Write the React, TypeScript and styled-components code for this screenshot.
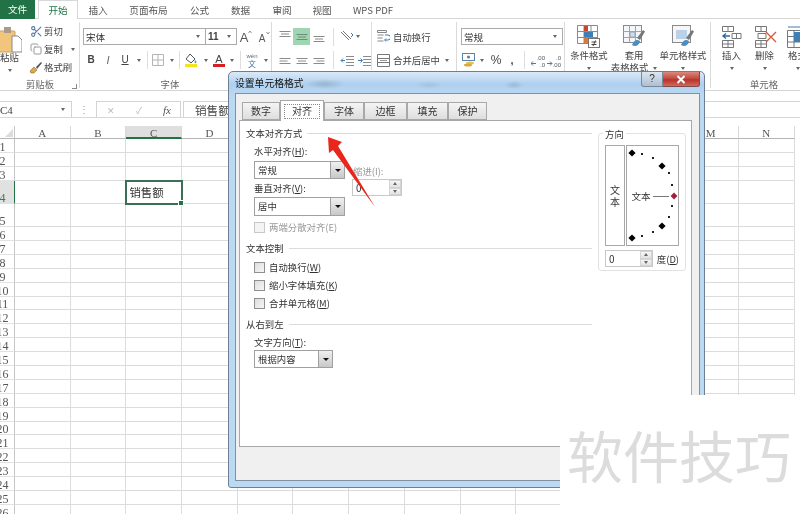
import { FC, ReactNode } from 'react';
import styled, { createGlobalStyle } from 'styled-components';
import { Copy, Scissors } from 'lucide-react';

const CJK = `"Noto Sans CJK SC", "Noto Sans", sans-serif`;
const SERIF = `"Liberation Serif", "Noto Sans CJK SC", serif`;

const Global = createGlobalStyle`
  html, body {
    margin: 0;
    padding: 0;
    background: #fff;
    overflow: hidden;
  }
`;

const Page = styled.div`
  position: relative;
  width: 800px;
  height: 514px;
  overflow: hidden;
  background: #fff;
  font-family: ${CJK};
  font-size: 9.4px;
  line-height: 14px;
  color: #444;
  filter: blur(0.35px);
`;

/* ---------- tabs ---------- */
const TabBar = styled.div`
  display: flex;
  height: 19px;
  box-sizing: border-box;
  border-bottom: 1px solid #d8d8d8;
`;
const FileTab = styled.div`
  width: 35px;
  height: 19px;
  margin-right: 3px;
  background: #217346;
  color: #fff;
  font-size: 9.6px;
  line-height: 19px;
  text-align: center;
`;
const Tab = styled.div<{ $w: number; $active?: boolean }>`
  width: ${({ $w }) => $w}px;
  height: ${({ $active }) => ($active ? 19 : 18)}px;
  box-sizing: border-box;
  font-size: 9.6px;
  line-height: 18px;
  text-align: center;
  color: ${({ $active }) => ($active ? '#217346' : '#555')};
  background: #fff;
  border: 1px solid ${({ $active }) => ($active ? '#d8d8d8' : 'transparent')};
  border-bottom: 0;
`;

/* ---------- ribbon ---------- */
const Ribbon = styled.div`
  display: flex;
  height: 72px;
  box-sizing: border-box;
  border-bottom: 1px solid #d4d4d4;
`;
const Group = styled.div<{ $w: number; $plain?: boolean }>`
  flex: none;
  width: ${({ $w }) => $w}px;
  display: flex;
  flex-direction: column;
  background: ${({ $plain }) =>
    $plain ? 'none' : 'linear-gradient(#dadada, #dadada) right 3px / 1px 66px no-repeat'};
`;
const GroupBody = styled.div<{ $top?: number; $left?: number }>`
  height: 59px;
  box-sizing: border-box;
  padding-top: ${({ $top }) => $top ?? 0}px;
  padding-left: ${({ $left }) => $left ?? 0}px;
  display: flex;
`;
const GroupLabel = styled.div<{ $pr?: number }>`
  height: 12px;
  line-height: 12px;
  padding-right: ${({ $pr }) => $pr ?? 0}px;
  text-align: center;
  color: #666;
  position: relative;
`;
const Launcher = styled.span`
  position: absolute;
  right: 3px;
  bottom: 1px;
  width: 4px;
  height: 4px;
  border-left: 1px solid #888;
  border-bottom: 1px solid #888;
  transform: scaleX(-1);
`;
const Stack = styled.div<{ $gap?: number }>`
  display: flex;
  flex-direction: column;
  gap: ${({ $gap }) => $gap ?? 6}px;
`;
const Row = styled.div<{ $h?: number }>`
  display: flex;
  align-items: center;
  height: ${({ $h }) => $h ?? 18}px;
`;
const Slot = styled.div<{ $w: number; $on?: boolean }>`
  flex: none;
  width: ${({ $w }) => $w}px;
  height: 100%;
  display: flex;
  align-items: center;
  justify-content: center;
  background: ${({ $on }) => ($on ? '#9fd5b0' : 'none')};
`;
const Divider = styled.div<{ $w: number }>`
  flex: none;
  width: ${({ $w }) => $w}px;
  height: 18px;
  background: linear-gradient(#dedede, #dedede) center / 1px 100% no-repeat;
`;
const Caret = styled.span`
  flex: none;
  width: 0;
  height: 0;
  border-left: 2.5px solid transparent;
  border-right: 2.5px solid transparent;
  border-top: 3px solid #666;
`;
const Field = styled.div<{ $w: number }>`
  width: ${({ $w }) => $w}px;
  height: 17px;
  box-sizing: border-box;
  border: 1px solid #ababab;
  margin-right: -1px;
  padding: 0 5px 0 2px;
  display: flex;
  align-items: center;
  justify-content: space-between;
  background: #fff;
  color: #333;
  font-size: 9.6px;
`;
const Glyph = styled.span<{ $size?: number; $weight?: number; $italic?: boolean; $line?: boolean; $color?: string }>`
  font-family: "Liberation Sans", sans-serif;
  font-size: ${({ $size }) => $size ?? 11}px;
  font-weight: ${({ $weight }) => $weight ?? 400};
  font-style: ${({ $italic }) => ($italic ? 'italic' : 'normal')};
  text-decoration: ${({ $line }) => ($line ? 'underline' : 'none')};
  color: ${({ $color }) => $color ?? '#444'};
`;
const SmallTool = styled.div`
  display: flex;
  align-items: center;
  height: 18px;
  width: 50px;
`;
const ToolIcon = styled.span`
  flex: none;
  width: 14px;
  display: flex;
  justify-content: center;
`;
const ToolText = styled.span<{ $w?: number }>`
  margin-left: 1px;
  width: ${({ $w }) => $w ?? 'auto'}px;
  white-space: nowrap;
  color: #444;
`;
const PasteButton = styled.div`
  flex: none;
  width: 22px;
  margin-right: 7px;
  display: flex;
  flex-direction: column;
  align-items: flex-start;
  padding-top: 4px;
`;
const PasteText = styled.span`
  height: 14px;
  margin-top: -3px;
  font-size: 9.4px;
`;
const PasteCaret = styled(Caret)`
  margin: 5px 0 0 8px;
`;
const BigButton = styled.div<{ $w: number }>`
  flex: none;
  width: ${({ $w }) => $w}px;
  height: 59px;
  display: flex;
  flex-direction: column;
  align-items: center;
  padding-top: 6px;
  box-sizing: border-box;
  white-space: nowrap;
`;
const BigText = styled.span`
  line-height: 12px;
  text-align: center;
`;
const BigCaret = styled(Caret)`
  margin-top: 6px;
`;
const InlineCaret = styled(Caret)`
  display: inline-block;
  margin-left: 5px;
  vertical-align: middle;
`;
const AlignLeft = styled.div`
  width: 100px;
  height: 59px;
  box-sizing: border-box;
  padding: 9px 0 0 4px;
  background: linear-gradient(#dedede, #dedede) right 3px / 1px 48px no-repeat;
`;
const AlignRight = styled.div`
  padding-top: 9px;
  padding-left: 5px;
`;

/* ---------- formula bar ---------- */
const FormulaBar = styled.div`
  display: flex;
  height: 27px;
  padding-top: 10px;
  box-sizing: border-box;
  border-bottom: 1px solid #d8d8d8;
`;
const NameBox = styled.div`
  width: 72px;
  box-sizing: border-box;
  border: 1px solid #d4d4d4;
  border-left: 0;
  border-bottom: 0;
  display: flex;
  align-items: center;
  justify-content: space-between;
  padding-right: 6px;
  font-family: ${SERIF};
  font-size: 11px;
  color: #444;
`;
const Grip = styled.div`
  width: 24px;
  display: flex;
  justify-content: center;
  align-items: center;
  color: #999;
  font-size: 10px;
`;
const FxBox = styled.div`
  width: 85px;
  box-sizing: border-box;
  border: 1px solid #d4d4d4;
  border-bottom: 0;
  display: grid;
  grid-template-columns: 28px 28px 28px;
  align-items: center;
  justify-items: center;
  color: #bbb;
`;
const FxText = styled.span`
  font-family: ${SERIF};
  font-style: italic;
  font-size: 11px;
  color: #555;
`;
const FormulaInput = styled.div`
  flex: 1;
  margin-left: 2px;
  box-sizing: border-box;
  border: 1px solid #d4d4d4;
  border-right: 0;
  border-bottom: 0;
  padding-left: 11px;
  font-size: 11.6px;
  line-height: 16px;
  color: #444;
`;

/* ---------- sheet ---------- */
const Sheet = styled.div`
  margin-top: 8px;
`;
const SheetRow = styled.div<{ $h: number }>`
  display: flex;
  height: ${({ $h }) => $h}px;
`;
const RowHead = styled.div<{ $active?: boolean }>`
  flex: none;
  width: 15px;
  box-sizing: border-box;
  padding-right: 9px;
  display: flex;
  justify-content: center;
  align-items: flex-end;
  background: ${({ $active }) => ($active ? '#e1e1e1' : '#fff')};
  border-right: 1px solid ${({ $active }) => ($active ? '#217346' : '#c6c6c6')};
  border-bottom: 1px solid #e2e2e2;
  font-family: ${SERIF};
  font-size: 12px;
  line-height: 10px;
  color: ${({ $active }) => ($active ? '#3d7a5a' : '#555')};
`;
const ColHead = styled.div<{ $active?: boolean }>`
  flex: none;
  width: 55.7px;
  box-sizing: border-box;
  text-align: center;
  background: ${({ $active }) => ($active ? '#dfdfdf' : '#fff')};
  border-right: 1px solid #d8d8d8;
  border-bottom: ${({ $active }) => ($active ? '2px solid #217346' : '1px solid #b5b5b5')};
  font-family: ${SERIF};
  font-size: 11px;
  line-height: 14px;
  color: #555;
`;
const Corner = styled.div`
  flex: none;
  width: 15px;
  box-sizing: border-box;
  border-right: 1px solid #c6c6c6;
  border-bottom: 1px solid #b5b5b5;
  display: flex;
  align-items: flex-end;
  justify-content: flex-end;
  padding: 0 1px 1px 0;
`;
const CornerMark = styled.span`
  width: 0;
  height: 0;
  border-left: 8px solid transparent;
  border-bottom: 8px solid #dcdcdc;
`;
const Cell = styled.div<{ $active?: boolean }>`
  flex: none;
  position: relative;
  width: 55.7px;
  box-sizing: border-box;
  border-right: 1px solid #dcdcdc;
  border-bottom: 1px solid #dcdcdc;
  display: flex;
  align-items: center;
  padding-left: 3px;
  font-size: 11.4px;
  color: #333;
  ${({ $active }) =>
    $active &&
    `
    outline: 2px solid #3b6f58;
    outline-offset: -1px;
    z-index: 1;
    &::after {
      content: '';
      position: absolute;
      right: -3px;
      bottom: -3px;
      width: 4px;
      height: 4px;
      background: #217346;
      border: 1px solid #fff;
    }
  `}
`;

/* ---------- dialog ---------- */
const Dialog = styled.div`
  position: absolute;
  left: 228px;
  top: 71px;
  width: 477px;
  height: 417px;
  box-sizing: border-box;
  border: 1px solid #6d7f91;
  border-radius: 5px 5px 3px 3px;
  background: linear-gradient(#dbe9f7, #aed0ef 12px, #bcd9f2 24px);
  z-index: 2;
`;
const TitleBar = styled.div`
  height: 21px;
  padding-left: 6px;
  display: flex;
  justify-content: space-between;
  background:
    radial-gradient(ellipse 20px 5px at 96px 12px, #8ca6c0aa, transparent),
    radial-gradient(ellipse 14px 4px at 200px 13px, #9ab6d088, transparent),
    radial-gradient(ellipse 10px 4px at 285px 13px, #8ca6c088, transparent);
`;
const TitleText = styled.span`
  font-size: 9.8px;
  line-height: 22px;
  color: #111;
`;
const WindowButtons = styled.div`
  display: flex;
  height: 15px;
  margin-right: 4px;
`;
const HelpButton = styled.div`
  width: 22px;
  box-sizing: border-box;
  border: 1px solid #7a8a9a;
  border-top: 0;
  border-radius: 0 0 0 3px;
  background: linear-gradient(#dbe6f0, #aebfd0);
  text-align: center;
  font-family: "Liberation Sans", sans-serif;
  font-size: 10px;
  line-height: 13px;
  color: #333;
`;
const CloseButton = styled.div`
  width: 37px;
  box-sizing: border-box;
  border: 1px solid #7a4a4a;
  border-left: 0;
  border-top: 0;
  border-radius: 0 0 3px 0;
  background: linear-gradient(#d98a7e, #c0453a 50%, #b9312a 55%, #d06a5c);
  display: flex;
  align-items: center;
  justify-content: center;
`;
const DialogInner = styled.div`
  height: 388px;
  margin: 0 4px 0 6px;
  box-sizing: border-box;
  border: 1px solid #7f92a5;
  background: #f0f0f0;
  padding: 6px 7px 0 3px;
`;
const DialogTabs = styled.div`
  display: flex;
  height: 20px;
  padding-left: 3px;
  align-items: flex-end;
  position: relative;
  z-index: 1;
`;
const DialogTab = styled.div<{ $w: number; $active?: boolean }>`
  width: ${({ $w }) => $w}px;
  height: ${({ $active }) => ($active ? 21 : 18)}px;
  box-sizing: border-box;
  border: 1px solid #a8a8a8;
  border-bottom: ${({ $active }) => ($active ? 0 : 1)}px solid #a8a8a8;
  margin-bottom: ${({ $active }) => ($active ? -1 : 0)}px;
  background: ${({ $active }) => ($active ? '#fff' : 'linear-gradient(#f4f4f4, #dedede)')};
  text-align: center;
  line-height: ${({ $active }) => ($active ? 19 : 16)}px;
  font-size: 10px;
  color: #333;
`;
const TabFocus = styled.span`
  display: block;
  margin: 3px 3px 0;
  height: 13px;
  line-height: 12px;
  border: 1px dotted #888;
`;
const DialogPanel = styled.div`
  height: 327px;
  box-sizing: border-box;
  border: 1px solid #a8a8a8;
  background: #fff;
  padding: 5px 0 0 6px;
  display: flex;
  color: #444;
`;
const LeftPane = styled.div`
  width: 346px;
`;
const SectionHead = styled.div<{ $mt?: number }>`
  display: flex;
  align-items: center;
  gap: 5px;
  height: 14px;
  margin-top: ${({ $mt }) => $mt ?? 0}px;
  color: #333;
  &::after {
    content: '';
    flex: 1;
    height: 1px;
    background: #dcdcdc;
  }
`;
const FieldsRow = styled.div`
  display: flex;
  padding-left: 8px;
`;
const FieldCol = styled.div<{ $w: number; $pt?: number; $ml?: number }>`
  width: ${({ $w }) => $w}px;
  padding-top: ${({ $pt }) => $pt ?? 0}px;
  margin-left: ${({ $ml }) => $ml ?? 0}px;
`;
const FieldLabel = styled.div<{ $mt?: number; $off?: boolean; $indent?: number }>`
  height: 14px;
  margin-top: ${({ $mt }) => $mt ?? 0}px;
  margin-left: ${({ $indent }) => $indent ?? 0}px;
  color: ${({ $off }) => ($off ? '#999' : '#333')};
  white-space: nowrap;
`;
const Key = styled.span`
  text-decoration: underline;
`;
const Combo = styled.div<{ $w: number; $mt: number; $h?: number; $ml?: number }>`
  width: ${({ $w }) => $w}px;
  height: ${({ $h }) => $h ?? 18}px;
  margin-top: ${({ $mt }) => $mt}px;
  margin-left: ${({ $ml }) => $ml ?? 0}px;
  box-sizing: border-box;
  border: 1px solid #a0a0a0;
  display: flex;
  align-items: stretch;
  background: #fff;
  color: #333;
`;
const ComboValue = styled.span`
  flex: 1;
  padding-left: 3px;
  line-height: 16px;
`;
const ComboButton = styled.span`
  flex: none;
  width: 13px;
  border-left: 1px solid #a0a0a0;
  background: linear-gradient(#f0f0f0, #c8c8c8);
  display: flex;
  align-items: center;
  justify-content: center;
`;
const ComboCaret = styled(Caret)`
  border-top-color: #111;
  border-left-width: 3px;
  border-right-width: 3px;
`;
const Spinner = styled.div<{ $w: number; $h: number; $mt?: number }>`
  width: ${({ $w }) => $w}px;
  height: ${({ $h }) => $h}px;
  margin-top: ${({ $mt }) => $mt ?? 0}px;
  box-sizing: border-box;
  border: 1px solid #c8c8c8;
  display: flex;
  align-items: center;
  justify-content: space-between;
  padding-left: 3px;
  background: #fff;
  color: #333;
  font-size: 10px;
`;
const SpinButtons = styled.span`
  width: 12px;
  height: 100%;
  display: flex;
  flex-direction: column;
  align-items: stretch;
`;
const SpinPart = styled.span`
  flex: 1;
  display: flex;
  align-items: center;
  justify-content: center;
  background: linear-gradient(#f6f6f6, #e2e2e2);
  border: 1px solid #d4d4d4;
`;
const SpinArrow = styled.span<{ $down?: boolean }>`
  width: 0;
  height: 0;
  border-left: 2.5px solid transparent;
  border-right: 2.5px solid transparent;
  border-top: ${({ $down }) => ($down ? '3px solid #666' : '0')};
  border-bottom: ${({ $down }) => ($down ? '0' : '3px solid #666')};
`;
const CheckRow = styled.div<{ $mt: number; $off?: boolean; $indent?: number }>`
  display: flex;
  align-items: center;
  gap: 4px;
  height: 14px;
  margin-top: ${({ $mt }) => $mt}px;
  margin-left: ${({ $indent }) => $indent ?? 8}px;
  color: ${({ $off }) => ($off ? '#999' : '#333')};
`;
const CheckBox = styled.span<{ $off?: boolean }>`
  width: 9px;
  height: 9px;
  border: 1px solid ${({ $off }) => ($off ? '#c8c8c8' : '#8f8f8f')};
  background: ${({ $off }) => ($off ? '#f4f4f4' : 'linear-gradient(135deg, #ddd, #f6f6f6)')};
`;
const Orientation = styled.div`
  width: 88px;
  height: 138px;
  margin: 7px 0 0 6px;
  box-sizing: border-box;
  border: 1px solid #e2e2e2;
  border-radius: 3px;
  padding: 0 6px;
`;
const OrientationLabel = styled.div`
  height: 14px;
  margin: -7px 0 0 -2px;
  padding: 0 2px;
  width: fit-content;
  background: #fff;
  color: #333;
`;
const DialRow = styled.div`
  display: flex;
  gap: 1px;
  margin-top: 4px;
`;
const VerticalBox = styled.div`
  width: 20px;
  height: 101px;
  box-sizing: border-box;
  border: 1px solid #a8a8a8;
  display: flex;
  align-items: center;
  justify-content: center;
  text-align: center;
  font-size: 10px;
  line-height: 12px;
  color: #333;
`;
const DialBox = styled.div`
  width: 53px;
  height: 101px;
  box-sizing: border-box;
  border: 1px solid #a8a8a8;
`;
const DegreeRow = styled.div`
  display: flex;
  align-items: center;
  gap: 4px;
  margin-top: 4px;
  color: #333;
  white-space: nowrap;
`;

/* ---------- overlays ---------- */
const ArrowMark = styled.svg`
  position: absolute;
  left: 320px;
  top: 130px;
  z-index: 3;
`;
const Watermark = styled.div`
  position: absolute;
  left: 560px;
  top: 395px;
  width: 240px;
  height: 119px;
  box-sizing: border-box;
  padding: 19px 0 0 7px;
  background: #fff;
  z-index: 4;
  color: #dcdcdc;
  font-size: 56px;
  line-height: 80px;
  white-space: nowrap;
`;

/* ---------- drawings ---------- */
const PasteIcon = () => (
  <svg width="22" height="27" viewBox="0 0 22 27">
    <rect x="-5" y="5" width="20" height="21" rx="1" fill="#f1c67c" stroke="#c9a25f" />
    <rect x="4" y="1" width="7" height="6" fill="#a89c88" />
    <path d="M12 10h6l4 4v12H12z" fill="#fff" stroke="#8a8a8a" />
  </svg>
);
const BrushIcon = () => (
  <svg width="14" height="13" viewBox="0 0 14 13">
    <path d="M1 10l4-4 3 3-3 3H2z" fill="#d9a94e" stroke="#8b6a2c" strokeWidth=".6" />
    <path d="M7 6l5-5 1 1-5 6z" fill="#555" />
  </svg>
);
const BorderIcon = () => (
  <svg width="12" height="12" viewBox="0 0 12 12" fill="none" stroke="#b5b5b5">
    <path d="M.5.5h11v11H.5zM6 .5v11M.5 6h11" />
  </svg>
);
const FillIcon = () => (
  <svg width="14" height="15" viewBox="0 0 14 15">
    <path d="M6 1l5 5-4 4-5-4z" fill="#fff" stroke="#555" />
    <path d="M11 7c1 1 2 2 1 3s-2-1-1-3z" fill="#4a90c4" />
    <rect x="1" y="11" width="12" height="3" fill="#f4e320" />
  </svg>
);
const FontColorIcon = () => (
  <svg width="14" height="15" viewBox="0 0 14 15">
    <rect x="1" y="11" width="12" height="3" fill="#d81e1e" />
    <text x="7" y="10" fontFamily="Liberation Sans" fontSize="11" textAnchor="middle" fill="#444">A</text>
  </svg>
);
const PhoneticIcon = () => (
  <svg width="16" height="16" viewBox="0 0 16 16">
    <text x="8" y="6" fontFamily="Liberation Sans" fontSize="6" textAnchor="middle" fill="#666">wén</text>
    <text x="8" y="15" fontFamily="Noto Sans CJK SC" fontSize="8" textAnchor="middle" fill="#4472a8">文</text>
  </svg>
);
const SizeA: FC<{ big?: boolean }> = ({ big }) => (
  <svg width="14" height="13" viewBox="0 0 14 13">
    <text x="6" y="12" fontFamily="Liberation Sans" fontSize={big ? 13 : 10} textAnchor="middle" fill="#555">A</text>
    <path d={big ? 'M10.5 3l1.5-2 1.5 2' : 'M10.5 2l1.5 2 1.5-2'} fill="none" stroke="#777" strokeWidth=".8" />
  </svg>
);
const Lines: FC<{ anchor: 'l' | 'c' | 'r'; y?: number; color?: string }> = ({ anchor, y = 3, color = '#8a8a8a' }) => {
  const widths = [11, 8, 11];
  return (
    <svg width="12" height="11" viewBox="0 0 12 11" stroke={color}>
      {widths.map((w, i) => {
        const x = anchor === 'l' ? 0.5 : anchor === 'c' ? (12 - w) / 2 : 11.5 - w;
        return <path key={i} d={`M${x} ${y + i * 2.5 + 0.5}h${w}`} />;
      })}
    </svg>
  );
};
const OrientIcon = () => (
  <svg width="14" height="13" viewBox="0 0 14 13" fill="none" stroke="#777">
    <path d="M1 2l8 8M3 1l8 8" />
    <path d="M11 3l2 2-2 2" stroke="#4472a8" />
  </svg>
);
const IndentIcon: FC<{ flip?: boolean }> = ({ flip }) => (
  <svg width="14" height="11" viewBox="0 0 14 11" fill="none" stroke="#8a8a8a">
    <path d="M6 1.5h8M6 4.5h8M6 7.5h8M6 10.5h8" />
    <path d={flip ? 'M1 5.5h4M3.5 3.5l2 2-2 2' : 'M5 5.5H1M3 3.5l-2 2 2 2'} stroke="#3f7fb5" />
  </svg>
);
const WrapIcon = () => (
  <svg width="13" height="13" viewBox="0 0 13 13" fill="none" stroke="#888">
    <path d="M.5.5h9v2h-9zM.5 5h6M.5 8h5M.5 11h6" />
    <path d="M8 5h3a1.5 1.5 0 010 5H8M9 8.5L7.5 10 9 11.5" stroke="#3f7fb5" />
  </svg>
);
const MergeIcon = () => (
  <svg width="13" height="13" viewBox="0 0 13 13" fill="none" stroke="#777">
    <path d="M.5.5h12v12H.5zM.5 4.5h12M.5 8.5h12" />
    <path d="M3 6.5h7" stroke="#999" />
  </svg>
);
const CurrencyIcon = () => (
  <svg width="15" height="14" viewBox="0 0 15 14">
    <rect x=".5" y=".5" width="12" height="7" fill="#fff" stroke="#5b84ad" />
    <circle cx="6.5" cy="4" r="1.6" fill="#5b84ad" />
    <ellipse cx="8" cy="10" rx="4" ry="1.5" fill="#e5c25a" />
    <ellipse cx="6" cy="12" rx="4" ry="1.5" fill="#d7a93b" />
  </svg>
);
const DecimalIcon: FC<{ more?: boolean }> = ({ more }) => (
  <svg width="14" height="13" viewBox="0 0 14 13">
    <text x="14" y="5.5" fontFamily="Liberation Sans" fontSize="6" textAnchor="end" fill="#555">{more ? '.00' : '.0'}</text>
    <text x="14" y="12.5" fontFamily="Liberation Sans" fontSize="6" textAnchor="end" fill="#555">{more ? '.0' : '.00'}</text>
    <path d={more ? 'M5 9.5H0M2 7.5L0 9.5l2 2' : 'M0 9.5h5M3 7.5l2 2-2 2'} fill="none" stroke="#3f7fb5" />
  </svg>
);
const TableBase = () => (
  <>
    <path d="M.5.5h20v18H.5zM.5 6.5h20M.5 12.5h20M7 .5v18M14 .5v18" fill="#fff" stroke="#8a8a8a" />
  </>
);
const CondIcon = () => (
  <svg width="24" height="24" viewBox="0 0 24 24">
    <TableBase />
    <rect x="7" y="1" width="4" height="5" fill="#c8452e" />
    <rect x="7" y="7" width="9" height="5" fill="#3f7fb5" />
    <rect x="7" y="13" width="5" height="5" fill="#d9793a" />
    <rect x="11.5" y="13.5" width="11" height="9" fill="#fff" stroke="#777" />
    <path d="M14.5 17h5M14.5 19.5h5M18.5 15.5l-2.5 5.5" stroke="#444" fill="none" />
  </svg>
);
const TableStyleIcon: FC<{ plain?: boolean }> = ({ plain }) => (
  <svg width="24" height="24" viewBox="0 0 24 24">
    <rect x="1.5" y=".5" width="18" height="17" fill="#f4f6fa" stroke="#8a8a8a" />
    {plain ? (
      <rect x="5" y="5" width="11" height="9" fill="#bcd0e6" />
    ) : (
      <path d="M1.5 6.5h18M1.5 12.5h18M7.5.5v17M13.5.5v17M8 7h5v5H8z" fill="#cfdcea" stroke="#9aa6b4" />
    )}
    <path d="M15 13l6-8 2 1.5-5 8.5z" fill="#777" />
    <path d="M10 20c2-5 5-6 8-4-1 5-5 6-8 4z" fill="#4a8ec2" />
  </svg>
);
const InsertIcon = () => (
  <svg width="24" height="24" viewBox="0 0 24 24" fill="none" stroke="#777">
    <path d="M2.5 1.5h11v5h-11zM8 1.5v5M2.5 15.5h11v7h-11zM8 15.5v7M2.5 19h11M12 8.5h9v5h-9zM16.5 8.5v5" />
    <path d="M3 11h7M6 8.5L3 11l3 2.5" stroke="#2b6ca8" strokeWidth="1.4" />
  </svg>
);
const DeleteIcon = () => (
  <svg width="24" height="24" viewBox="0 0 24 24" fill="none" stroke="#777">
    <path d="M2.5 1.5h11v5h-11zM8 1.5v5M2.5 15.5h11v7h-11zM8 15.5v7M2.5 19h11M5 8.5h8v5H5z" />
    <path d="M13 7l10 10M23 7L13 17" stroke="#d9583f" strokeWidth="1.4" />
  </svg>
);
const FormatIcon = () => (
  <svg width="24" height="24" viewBox="0 0 24 24" fill="none" stroke="#777">
    <path d="M1.5 5.5h21v17h-21zM8 5.5v17M16 5.5v17M1.5 11.5h21M1.5 17h21" />
    <rect x="8" y="7" width="8" height="10" fill="#3f7fb5" stroke="none" />
    <path d="M2 2h20" stroke="#3f7fb5" />
  </svg>
);

const DIAL_LARGE: [number, number][] = [[5, 7], [35, 20], [35, 80], [5, 92]];
const DIAL_SMALL: [number, number][] = [[15, 8], [26, 12], [42, 27], [45, 39], [45, 60], [42, 71], [26, 86], [15, 90]];
const Diamond: FC<{ x: number; y: number; r: number; fill: string }> = ({ x, y, r, fill }) => (
  <path d={`M${x} ${y - r}L${x + r} ${y}L${x} ${y + r}L${x - r} ${y}z`} fill={fill} />
);
const DialDrawing = () => (
  <svg width="51" height="99" viewBox="0 0 51 99">
    {DIAL_LARGE.map(([x, y]) => (
      <Diamond key={`${x}-${y}`} x={x} y={y} r={3.6} fill="#000" />
    ))}
    {DIAL_SMALL.map(([x, y]) => (
      <rect key={`${x}-${y}`} x={x - 1} y={y - 1} width="2" height="2" fill="#222" />
    ))}
    <path d="M26 50.5h16" stroke="#777" />
    <Diamond x={47} y={50} r={3.4} fill="#a02040" />
    <text x="14" y="54" fontFamily="Noto Sans CJK SC" fontSize="9.6" textAnchor="middle" fill="#333">文本</text>
  </svg>
);

const Spin: FC<{ w: number; h: number; mt?: number; value: string }> = ({ w, h, mt, value }) => (
  <Spinner $w={w} $h={h} $mt={mt}>
    {value}
    <SpinButtons>
      <SpinPart><SpinArrow /></SpinPart>
      <SpinPart><SpinArrow $down /></SpinPart>
    </SpinButtons>
  </Spinner>
);
const ComboBox: FC<{ w: number; mt: number; h?: number; ml?: number; value: string }> = ({ w, mt, h, ml, value }) => (
  <Combo $w={w} $mt={mt} $h={h} $ml={ml}>
    <ComboValue>{value}</ComboValue>
    <ComboButton><ComboCaret /></ComboButton>
  </Combo>
);
const Check: FC<{ mt: number; off?: boolean; children: ReactNode }> = ({ mt, off, children }) => (
  <CheckRow $mt={mt} $off={off}>
    <CheckBox $off={off} />
    <span>{children}</span>
  </CheckRow>
);

/* ---------- data ---------- */
const COLS = ['A', 'B', 'C', 'D', 'E', 'F', 'G', 'H', 'I', 'J', 'K', 'L', 'M', 'N'];
const ROW_HEIGHTS: Record<number, number> = { 1: 14, 2: 14, 3: 14, 4: 23, 5: 23, 6: 14 };
const ROWS = Array.from({ length: 26 }, (_, i) => i + 1);
const TABS: [string, number, boolean?][] = [
  ['开始', 40, true], ['插入', 40], ['页面布局', 61], ['公式', 41], ['数据', 41], ['审阅', 42], ['视图', 38], ['WPS PDF', 64],
];
const DIALOG_TABS: [string, number, boolean?][] = [
  ['数字', 38], ['对齐', 44, true], ['字体', 40], ['边框', 43], ['填充', 41], ['保护', 39],
];

const App: FC = () => (
  <Page>
    <Global />
    <TabBar>
      <FileTab>文件</FileTab>
      {TABS.map(([name, w, active]) => (
        <Tab key={name} $w={w} $active={active}>{name}</Tab>
      ))}
    </TabBar>

    <Ribbon>
      <Group $w={80}>
        <GroupBody $top={3}>
          <PasteButton>
            <PasteIcon />
            <PasteText>粘贴</PasteText>
            <PasteCaret />
          </PasteButton>
          <Stack $gap={0}>
            <SmallTool><ToolIcon><Scissors size={13} color="#55789e" /></ToolIcon><ToolText>剪切</ToolText></SmallTool>
            <SmallTool><ToolIcon><Copy size={12} color="#999" /></ToolIcon><ToolText $w={27}>复制</ToolText><Caret /></SmallTool>
            <SmallTool><ToolIcon><BrushIcon /></ToolIcon><ToolText>格式刷</ToolText></SmallTool>
          </Stack>
        </GroupBody>
        <GroupLabel>剪贴板<Launcher /></GroupLabel>
      </Group>

      <Group $w={192}>
        <GroupBody $top={9} $left={3}>
          <Stack>
            <Row $h={17}>
              <Field $w={123}>宋体<Caret /></Field>
              <Field $w={32}><Glyph $size={10} $weight={700}>11</Glyph><Caret /></Field>
              <Slot $w={18}><SizeA big /></Slot>
              <Slot $w={18}><SizeA /></Slot>
            </Row>
            <Row>
              <Slot $w={16}><Glyph $weight={700} $size={10}>B</Glyph></Slot>
              <Slot $w={18}><Glyph $italic $size={11} $color="#666">I</Glyph></Slot>
              <Slot $w={16}><Glyph $line $size={10}>U</Glyph></Slot>
              <Slot $w={12}><Caret /></Slot>
              <Divider $w={4} />
              <Slot $w={18}><BorderIcon /></Slot>
              <Slot $w={10}><Caret /></Slot>
              <Divider $w={4} />
              <Slot $w={20}><FillIcon /></Slot>
              <Slot $w={10}><Caret /></Slot>
              <Slot $w={16}><FontColorIcon /></Slot>
              <Slot $w={10}><Caret /></Slot>
              <Divider $w={6} />
              <Slot $w={18}><PhoneticIcon /></Slot>
              <Slot $w={10}><Caret /></Slot>
            </Row>
          </Stack>
        </GroupBody>
        <GroupLabel $pr={12}>字体</GroupLabel>
      </Group>

      <Group $w={185}>
        <GroupBody>
          <AlignLeft>
            <Stack>
              <Row $h={17}>
                <Slot $w={17}><Lines anchor="c" y={0} /></Slot>
                <Slot $w={17} $on><Lines anchor="c" y={3} color="#6a8f78" /></Slot>
                <Slot $w={17}><Lines anchor="c" y={5} /></Slot>
                <Divider $w={12} />
                <Slot $w={16}><OrientIcon /></Slot>
                <Slot $w={6}><Caret /></Slot>
              </Row>
              <Row>
                <Slot $w={17}><Lines anchor="l" /></Slot>
                <Slot $w={17}><Lines anchor="c" /></Slot>
                <Slot $w={17}><Lines anchor="r" /></Slot>
                <Divider $w={12} />
                <Slot $w={16}><IndentIcon /></Slot>
                <Slot $w={18}><IndentIcon flip /></Slot>
              </Row>
            </Stack>
          </AlignLeft>
          <AlignRight>
            <Stack>
              <Row $h={17}><WrapIcon /><ToolText>&nbsp;自动换行</ToolText></Row>
              <Row><MergeIcon /><ToolText>&nbsp;合并后居中</ToolText><InlineCaret as="span" /></Row>
            </Stack>
          </AlignRight>
        </GroupBody>
        <GroupLabel />
      </Group>

      <Group $w={108}>
        <GroupBody $top={9} $left={4}>
          <Stack>
            <Row $h={17}><Field $w={102}>常规<Caret /></Field></Row>
            <Row>
              <Slot $w={16}><CurrencyIcon /></Slot>
              <Slot $w={9}><Caret /></Slot>
              <Slot $w={20}><Glyph $size={12}>%</Glyph></Slot>
              <Slot $w={12}><Glyph $size={11} $weight={700}>,</Glyph></Slot>
              <Divider $w={12} />
              <Slot $w={16}><DecimalIcon more /></Slot>
              <Slot $w={16}><DecimalIcon /></Slot>
            </Row>
          </Stack>
        </GroupBody>
        <GroupLabel />
      </Group>

      <Group $w={146}>
        <GroupBody $left={2}>
          <BigButton $w={44}><CondIcon /><BigText>条件格式</BigText><BigCaret /></BigButton>
          <BigButton $w={46}><TableStyleIcon /><BigText>套用<br />表格格式<InlineCaret as="span" /></BigText></BigButton>
          <BigButton $w={52}><TableStyleIcon plain /><BigText>单元格样式</BigText><BigCaret /></BigButton>
        </GroupBody>
        <GroupLabel />
      </Group>

      <Group $w={106} $plain>
        <GroupBody $left={4}>
          <BigButton $w={33}><InsertIcon /><BigText>插入</BigText><BigCaret /></BigButton>
          <BigButton $w={33}><DeleteIcon /><BigText>删除</BigText><BigCaret /></BigButton>
          <BigButton $w={33}><FormatIcon /><BigText>格式</BigText><BigCaret /></BigButton>
        </GroupBody>
        <GroupLabel>单元格</GroupLabel>
      </Group>
    </Ribbon>

    <FormulaBar>
      <NameBox>C4<Caret /></NameBox>
      <Grip>⋮</Grip>
      <FxBox>
        <span>✕</span>
        <span>✓</span>
        <FxText>fx</FxText>
      </FxBox>
      <FormulaInput>销售额</FormulaInput>
    </FormulaBar>

    <Sheet>
      <SheetRow $h={13}>
        <Corner><CornerMark /></Corner>
        {COLS.map(c => (
          <ColHead key={c} $active={c === 'C'}>{c}</ColHead>
        ))}
      </SheetRow>
      {ROWS.map(r => (
        <SheetRow key={r} $h={ROW_HEIGHTS[r] ?? 13.9}>
          <RowHead $active={r === 4}>{r}</RowHead>
          {COLS.map(c => (
            <Cell key={c} $active={r === 4 && c === 'C'}>
              {r === 4 && c === 'C' ? '销售额' : null}
            </Cell>
          ))}
        </SheetRow>
      ))}
    </Sheet>

    <Dialog>
      <TitleBar>
        <TitleText>设置单元格格式</TitleText>
        <WindowButtons>
          <HelpButton>?</HelpButton>
          <CloseButton>
            <svg width="10" height="9" viewBox="0 0 10 9">
              <path d="M1.5 1l7 7M8.5 1l-7 7" stroke="#fff" strokeWidth="2" />
            </svg>
          </CloseButton>
        </WindowButtons>
      </TitleBar>
      <DialogInner>
        <DialogTabs>
          {DIALOG_TABS.map(([name, w, active]) => (
            <DialogTab key={name} $w={w} $active={active}>
              {active ? <TabFocus>{name}</TabFocus> : name}
            </DialogTab>
          ))}
        </DialogTabs>
        <DialogPanel>
          <LeftPane>
            <SectionHead>文本对齐方式</SectionHead>
            <FieldsRow>
              <FieldCol $w={91} $pt={4}>
                <FieldLabel>水平对齐(<Key>H</Key>):</FieldLabel>
                <ComboBox w={91} mt={3} value="常规" />
                <FieldLabel $mt={2}>垂直对齐(<Key>V</Key>):</FieldLabel>
                <ComboBox w={91} mt={2} h={19} value="居中" />
              </FieldCol>
              <FieldCol $w={50} $ml={7} $pt={24}>
                <FieldLabel $off $indent={1}>缩进(I):</FieldLabel>
                <Spin w={50} h={17} mt={1} value="0" />
              </FieldCol>
            </FieldsRow>
            <Check mt={4} off>两端分散对齐(E)</Check>
            <SectionHead $mt={7}>文本控制</SectionHead>
            <Check mt={5}>自动换行(<Key>W</Key>)</Check>
            <Check mt={4}>缩小字体填充(<Key>K</Key>)</Check>
            <Check mt={4}>合并单元格(<Key>M</Key>)</Check>
            <SectionHead $mt={7}>从右到左</SectionHead>
            <FieldLabel $mt={4} $indent={8}>文字方向(<Key>T</Key>):</FieldLabel>
            <ComboBox w={79} mt={1} ml={8} value="根据内容" />
          </LeftPane>
          <Orientation>
            <OrientationLabel>方向</OrientationLabel>
            <DialRow>
              <VerticalBox>文<br />本</VerticalBox>
              <DialBox><DialDrawing /></DialBox>
            </DialRow>
            <DegreeRow>
              <Spin w={48} h={17} value="0" />
              <span>度(<Key>D</Key>)</span>
            </DegreeRow>
          </Orientation>
        </DialogPanel>
      </DialogInner>
    </Dialog>

    <ArrowMark width="60" height="80" viewBox="0 0 60 80">
      <path d="M8 7L22 12 18 16 55 77 13 20 9 23z" fill="#e8261c" />
    </ArrowMark>

    <Watermark>软件技巧</Watermark>
  </Page>
);

export default App;
